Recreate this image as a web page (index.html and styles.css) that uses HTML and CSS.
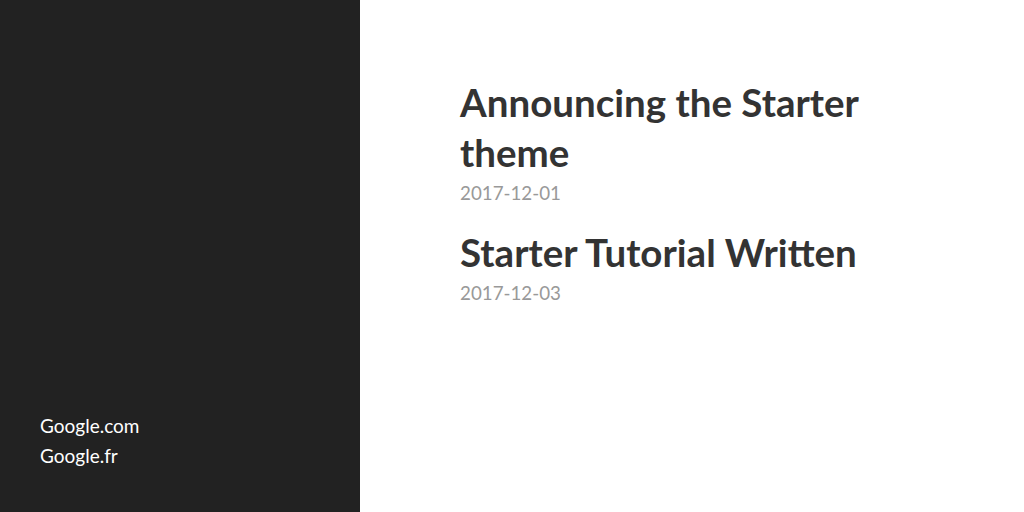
FILE: index.html
```html
<!DOCTYPE html>
<html>
<head>
<meta charset="utf-8">
<link rel="stylesheet" href="styles.css">
</head>
<body>
<div class="layout">
  <aside class="sidebar">
    <nav class="links">
      <a href="#">Google.com</a>
      <a href="#">Google.fr</a>
    </nav>
  </aside>
  <main class="content">
    <article class="post">
      <h1 class="post-title">Announcing the Starter theme</h1>
      <div class="post-date">2017-12-01</div>
    </article>
    <article class="post">
      <h1 class="post-title">Starter Tutorial Written</h1>
      <div class="post-date">2017-12-03</div>
    </article>
  </main>
</div>
</body>
</html>
```
FILE: styles.css
```css
html, body {
  margin: 0;
  padding: 0;
  height: 100%;
}
body {
  font-family: Lato, "PT Sans", sans-serif;
  background: #fff;
}
.layout {
  display: flex;
  height: 512px;
}
.sidebar {
  width: 360px;
  flex: none;
  background: #222;
  display: flex;
  flex-direction: column;
  justify-content: flex-end;
  padding: 0 40px 41px;
  box-sizing: border-box;
}
.links {
  display: flex;
  flex-direction: column;
}
.links a {
  color: #fff;
  text-decoration: none;
  font-size: 19px;
  line-height: 30px;
}
.content {
  padding: 77px 100px 0;
  width: 430px;
}
.post {
  margin-bottom: 21px;
}
.post-title {
  margin: 0;
  font-size: 38.5px;
  line-height: 50px;
  font-weight: 700;
  color: #333;
}
.post-date {
  margin-top: 3px;
  font-size: 18.75px;
  line-height: 26px;
  color: #999;
}
```
